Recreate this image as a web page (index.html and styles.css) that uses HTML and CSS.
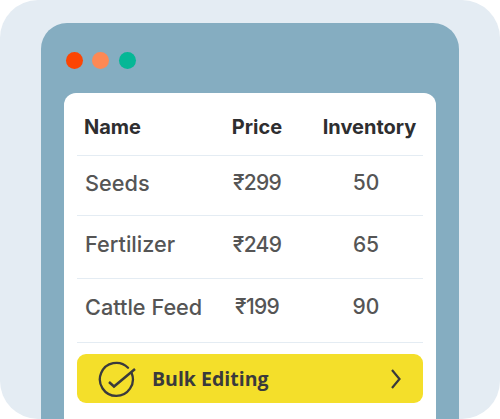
FILE: index.html
```html
<!DOCTYPE html>
<html lang="en">
<head>
    <meta charset="UTF-8">
    <title>Bulk Editing</title>
    <link rel="stylesheet" href="styles.css">
</head>
<body>
<div class="frame">
    <div class="window">
        <div class="dots">
            <span class="dot red"></span>
            <span class="dot orange"></span>
            <span class="dot green"></span>
        </div>
        <div class="panel">
            <div class="row head">
                <div class="name">Name</div>
                <div class="price">Price</div>
                <div class="stock">Inventory</div>
            </div>
            <div class="row r1">
                <div class="name">Seeds</div>
                <div class="price">₹299</div>
                <div class="stock">50</div>
            </div>
            <div class="row r2">
                <div class="name">Fertilizer</div>
                <div class="price">₹249</div>
                <div class="stock">65</div>
            </div>
            <div class="row r3">
                <div class="name">Cattle Feed</div>
                <div class="price">₹199</div>
                <div class="stock">90</div>
            </div>
            <div class="bulk">
                <svg class="check" width="38" height="38" viewBox="0 0 38 38" fill="none" stroke="#3a3a3c" stroke-width="2.300">
                    <path d="M33.700 13.300A16.500 16.500 0 1 1 30 7.700" stroke-linecap="round"/>
                    <path d="M11 22l5 4.500L37 9" stroke-width="2.500"/>
                </svg>
                <span class="bulk-text">Bulk Editing</span>
                <svg class="arrow" width="10" height="20" viewBox="0 0 10 20" fill="none" stroke="#3a3a3c" stroke-width="2.200">
                    <path d="M1 1l7.500 9L1 19"/>
                </svg>
            </div>
        </div>
    </div>
</div>
</body>
</html>
```

FILE: styles.css
```css
* {
    margin: 0;
    padding: 0;
    box-sizing: border-box;
}

body {
    width: 500px;
    height: 419px;
    background: #fff;
    overflow: hidden;
}

.frame {
    height: 419px;
    padding: 23px 41px 0;
    background: #e4ecf3;
    border-radius: 38px;
    overflow: hidden;
}

.window {
    height: 396px;
    padding: 0 23px;
    background: #85adc1;
    border-radius: 26px 26px 0 0;
}

.dots {
    display: flex;
    gap: 9.500px;
    height: 70px;
    padding: 29px 0 0 1.700px;
}

.dot {
    width: 17px;
    height: 17px;
    border-radius: 50%;
}

.red { background: #fc4503; }
.orange { background: #fd8955; }
.green { background: #06b796; }

.panel {
    height: 326px;
    padding: 0 13px;
    background: #fff;
    border-radius: 12px 12px 0 0;
}

.row {
    display: grid;
    grid-template-columns: 138px 84px 124px;
    align-items: center;
    font-family: Inter, sans-serif;
    font-size: 21px;
    font-weight: 500;
    color: #555;
    border-bottom: 1px solid #e4ecf3;
}

.head {
    height: 63px;
    padding-top: 5px;
    font-size: 20px;
    font-weight: 700;
    color: #2e2e30;
}

.r1 { height: 60px; padding-bottom: 6px; }
.r2 { height: 63px; padding-bottom: 6px; }
.r3 { height: 64px; padding-bottom: 8px; }

.row .name {
    padding-left: 8px;
    font-size: 21.700px;
}

.head .name {
    padding-left: 7px;
    font-size: 20px;
}

.price,
.stock {
    text-align: center;
}

.r1 .price,
.r2 .price,
.r3 .price {
    letter-spacing: -0.700px;
}

.stock {
    padding-left: 10px;
}

.head .stock {
    padding-left: 17px;
}

.bulk {
    display: flex;
    align-items: center;
    height: 49px;
    margin-top: 11px;
    padding: 0 22px 0 21px;
    background: #f4df2a;
    border-radius: 9px;
}

.bulk-text {
    flex: 1;
    margin-left: 16px;
    font-family: "Open Sans", sans-serif;
    font-size: 19.500px;
    font-weight: 700;
    color: #3a3a3c;
}
```
